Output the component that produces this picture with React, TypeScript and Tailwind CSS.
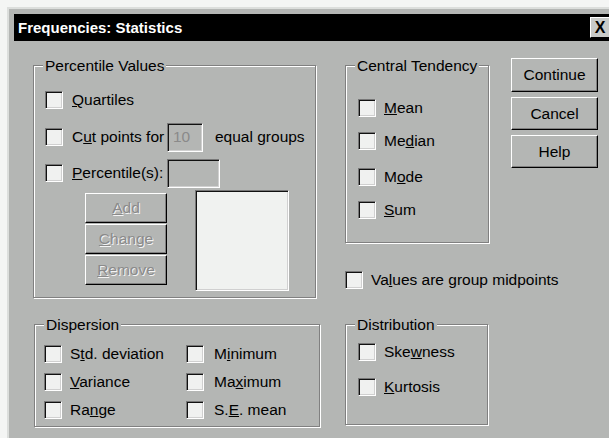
import React from "react";

const Box = () => (
  <span className="block w-[18px] h-[18px] shrink-0 bg-[#f0f1f0] border border-t-[#777] border-l-[#777] border-b-white border-r-white shadow-[inset_1px_1px_0_#111,inset_-1px_-1px_0_#d0d0d0]" />
);

const Check = ({ children, gap = "gap-[9px]" }: { children: React.ReactNode; gap?: string }) => (
  <div className={`flex items-center h-[18px] ${gap}`}>
    <Box />
    <span className="leading-none whitespace-nowrap">{children}</span>
  </div>
);

const Group = ({
  title,
  className,
  children,
}: {
  title: string;
  className: string;
  children: React.ReactNode;
}) => (
  <div
    className={`relative border border-[#808080] shadow-[1px_1px_0_#fff,inset_1px_1px_0_#fff] ${className}`}
  >
    <span className="absolute left-[9px] top-[-10px] px-[2px] bg-[#b4b6b4] leading-[19px] whitespace-nowrap">
      {title}
    </span>
    {children}
  </div>
);

const Button = ({ children, disabled }: { children: React.ReactNode; disabled?: boolean }) => (
  <div
    className={`h-full flex items-center justify-center bg-[#b4b6b4] border border-t-white border-l-white border-b-black border-r-black shadow-[inset_-1px_-1px_0_#808080] ${
      disabled ? "text-[#8a8a8a] [text-shadow:1px_1px_0_#f4f4f4]" : "text-black"
    }`}
  >
    {children}
  </div>
);

const Sunken = ({ className, children }: { className: string; children?: React.ReactNode }) => (
  <div
    className={`border border-t-[#777] border-l-[#777] border-b-white border-r-white shadow-[inset_1px_1px_0_#111,inset_-1px_-1px_0_#d0d0d0] ${className}`}
  >
    {children}
  </div>
);

export default function App() {
  return (
    <div className="w-[609px] h-[438px] overflow-hidden bg-[#f4f5f4] pt-[7px] pl-[7px] font-['Liberation_Sans',Arial,sans-serif] text-[15.5px] text-black">
      <div className="w-[610px] h-[440px] bg-[#b4b6b4] border-t-2 border-l-2 border-[#dcdedc] pt-[5px] pl-[5px]">
        {/* title bar */}
        <div className="flex items-center h-[27px] w-[596px] bg-black pl-[4px]">
          <span className="text-white font-bold text-[15px] leading-none">Frequencies: Statistics</span>
          <div className="ml-auto w-[20px] h-[21px] bg-[#c8cac8] border border-t-white border-l-white flex items-center justify-center">
            <span className="font-bold text-[16px] leading-none">X</span>
          </div>
        </div>

        <div className="flex pt-[17px] pl-[19px]">
          {/* left column */}
          <div className="w-[287px] flex flex-col">
            <Group title="Percentile Values" className="mt-[7px] w-[283px] h-[233px] pt-[25px] pl-[11px]">
              <Check>
                <u>Q</u>uartiles
              </Check>
              <div className="flex items-center h-[30px] mt-[13px]">
                <Box />
                <span className="ml-[9px] w-[95px] leading-none whitespace-nowrap">
                  C<u>u</u>t points for
                </span>
                <Sunken className="w-[36px] h-[29px] flex items-center pl-[5px] text-[#8a8a8a]">10</Sunken>
                <span className="ml-[12px] leading-none whitespace-nowrap">equal groups</span>
              </div>
              <div className="flex items-center h-[30px] mt-[6px]">
                <Box />
                <span className="ml-[9px] w-[95px] leading-none whitespace-nowrap">
                  <u>P</u>ercentile(s):
                </span>
                <Sunken className="w-[53px] h-[29px]" />
              </div>
              <div className="flex mt-[2px] pl-[40px]">
                <div className="flex flex-col gap-[1px] mt-[3px] w-[82px]">
                  <div className="h-[30px]">
                    <Button disabled>
                      <span>
                        <u>A</u>dd
                      </span>
                    </Button>
                  </div>
                  <div className="h-[30px]">
                    <Button disabled>
                      <span>
                        <u>C</u>hange
                      </span>
                    </Button>
                  </div>
                  <div className="h-[30px]">
                    <Button disabled>
                      <span>
                        <u>R</u>emove
                      </span>
                    </Button>
                  </div>
                </div>
                <Sunken className="ml-[28px] w-[94px] h-[101px] bg-[#f0f2f0]" />
              </div>
            </Group>

            <Group title="Dispersion" className="mt-[26px] ml-[1px] w-[286px] h-[103px] pt-[20px] pl-[9px]">
              <div className="grid grid-cols-[142px_1fr] gap-y-[10px]">
                <Check gap="gap-[8px]">
                  S<u>t</u>d. deviation
                </Check>
                <Check gap="gap-[10px]">
                  M<u>i</u>nimum
                </Check>
                <Check gap="gap-[8px]">
                  <u>V</u>ariance
                </Check>
                <Check gap="gap-[10px]">
                  Ma<u>x</u>imum
                </Check>
                <Check gap="gap-[8px]">
                  Ra<u>n</u>ge
                </Check>
                <Check gap="gap-[10px]">
                  S.<u>E</u>. mean
                </Check>
              </div>
            </Group>
          </div>

          {/* middle column */}
          <div className="ml-[25px] w-[144px] flex flex-col">
            <Group title="Central Tendency" className="mt-[7px] w-[144px] h-[178px] pt-[33px] pl-[12px]">
              <div className="flex flex-col">
                <Check gap="gap-[8px]">
                  <u>M</u>ean
                </Check>
                <div className="mt-[15px]">
                  <Check gap="gap-[8px]">
                    Me<u>d</u>ian
                  </Check>
                </div>
                <div className="mt-[18px]">
                  <Check gap="gap-[8px]">
                    M<u>o</u>de
                  </Check>
                </div>
                <div className="mt-[15px]">
                  <Check gap="gap-[8px]">
                    <u>S</u>um
                  </Check>
                </div>
              </div>
            </Group>
            <div className="mt-[28px]">
              <Check gap="gap-[8px]">
                Va<u>l</u>ues are group midpoints
              </Check>
            </div>
            <Group title="Distribution" className="mt-[35px] w-[143px] h-[101px] pt-[18px] pl-[12px]">
              <Check gap="gap-[8px]">
                Ske<u>w</u>ness
              </Check>
              <div className="mt-[17px]">
                <Check gap="gap-[8px]">
                  <u>K</u>urtosis
                </Check>
              </div>
            </Group>
          </div>

          {/* buttons */}
          <div className="ml-[22px] w-[87px] flex flex-col gap-[5px]">
            <div className="h-[34px]">
              <Button>
                <span>Continue</span>
              </Button>
            </div>
            <div className="h-[33px]">
              <Button>
                <span>Cancel</span>
              </Button>
            </div>
            <div className="h-[33px]">
              <Button>
                <span>Help</span>
              </Button>
            </div>
          </div>
        </div>
      </div>
    </div>
  );
}
